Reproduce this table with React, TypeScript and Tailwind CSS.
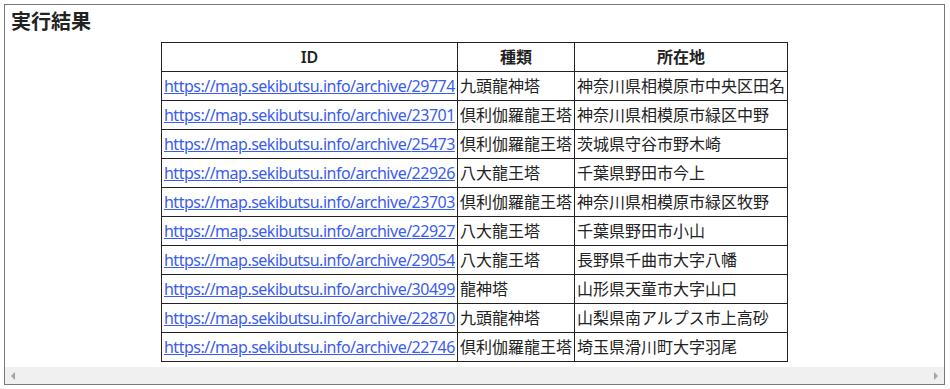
import React from "react";

const rows: [string, string, string][] = [
  ["29774", "九頭龍神塔", "神奈川県相模原市中央区田名"],
  ["23701", "倶利伽羅龍王塔", "神奈川県相模原市緑区中野"],
  ["25473", "倶利伽羅龍王塔", "茨城県守谷市野木崎"],
  ["22926", "八大龍王塔", "千葉県野田市今上"],
  ["23703", "倶利伽羅龍王塔", "神奈川県相模原市緑区牧野"],
  ["22927", "八大龍王塔", "千葉県野田市小山"],
  ["29054", "八大龍王塔", "長野県千曲市大字八幡"],
  ["30499", "龍神塔", "山形県天童市大字山口"],
  ["22870", "九頭龍神塔", "山梨県南アルプス市上高砂"],
  ["22746", "倶利伽羅龍王塔", "埼玉県滑川町大字羽尾"],
];

export default function App() {
  return (
    <div
      className="bg-white w-[950px] h-[389px] p-1"
      style={{ fontFamily: '"Noto Sans", "Noto Sans CJK JP", sans-serif' }}
    >
      <div className="w-[941px] h-[381px] border border-[#7a7a7a] flex flex-col">
        <div className="flex-1 flex flex-col overflow-hidden">
          <div className="h-[37px] pl-[6px] pt-[3px] text-[20px] leading-[28px] font-semibold text-[#222]">
            実行結果
          </div>
          <div className="flex justify-center">
            <table className="border-collapse text-[16px] leading-[20px] text-[#222]">
              <thead>
                <tr className="h-[29px]">
                  <th className="border border-[#222] font-semibold px-[2px] w-[296px]">ID</th>
                  <th className="border border-[#222] font-semibold px-[2px] w-[116px]">種類</th>
                  <th className="border border-[#222] font-semibold px-[2px] w-[213px]">所在地</th>
                </tr>
              </thead>
              <tbody>
                {rows.map(([id, kind, place]) => (
                  <tr key={id} className="h-[29px]">
                    <td className="border border-[#222] px-[2px] whitespace-nowrap">
                      <a
                        href={`https://map.sekibutsu.info/archive/${id}`}
                        className="text-[#3a5cf0] underline tracking-[-0.5px]"
                      >
                        https://map.sekibutsu.info/archive/{id}
                      </a>
                    </td>
                    <td className="border border-[#222] px-[2px] whitespace-nowrap">{kind}</td>
                    <td className="border border-[#222] px-[2px] whitespace-nowrap">{place}</td>
                  </tr>
                ))}
              </tbody>
            </table>
          </div>
        </div>
        <div className="h-[17px] bg-[#f0f0f0] flex items-center justify-between px-[6px]">
          <svg width="5" height="8" viewBox="0 0 5 8">
            <path d="M4 0 L0 4 L4 8 Z" fill="#a3a3a3" />
          </svg>
          <svg width="5" height="8" viewBox="0 0 5 8">
            <path d="M1 0 L5 4 L1 8 Z" fill="#a3a3a3" />
          </svg>
        </div>
      </div>
    </div>
  );
}
